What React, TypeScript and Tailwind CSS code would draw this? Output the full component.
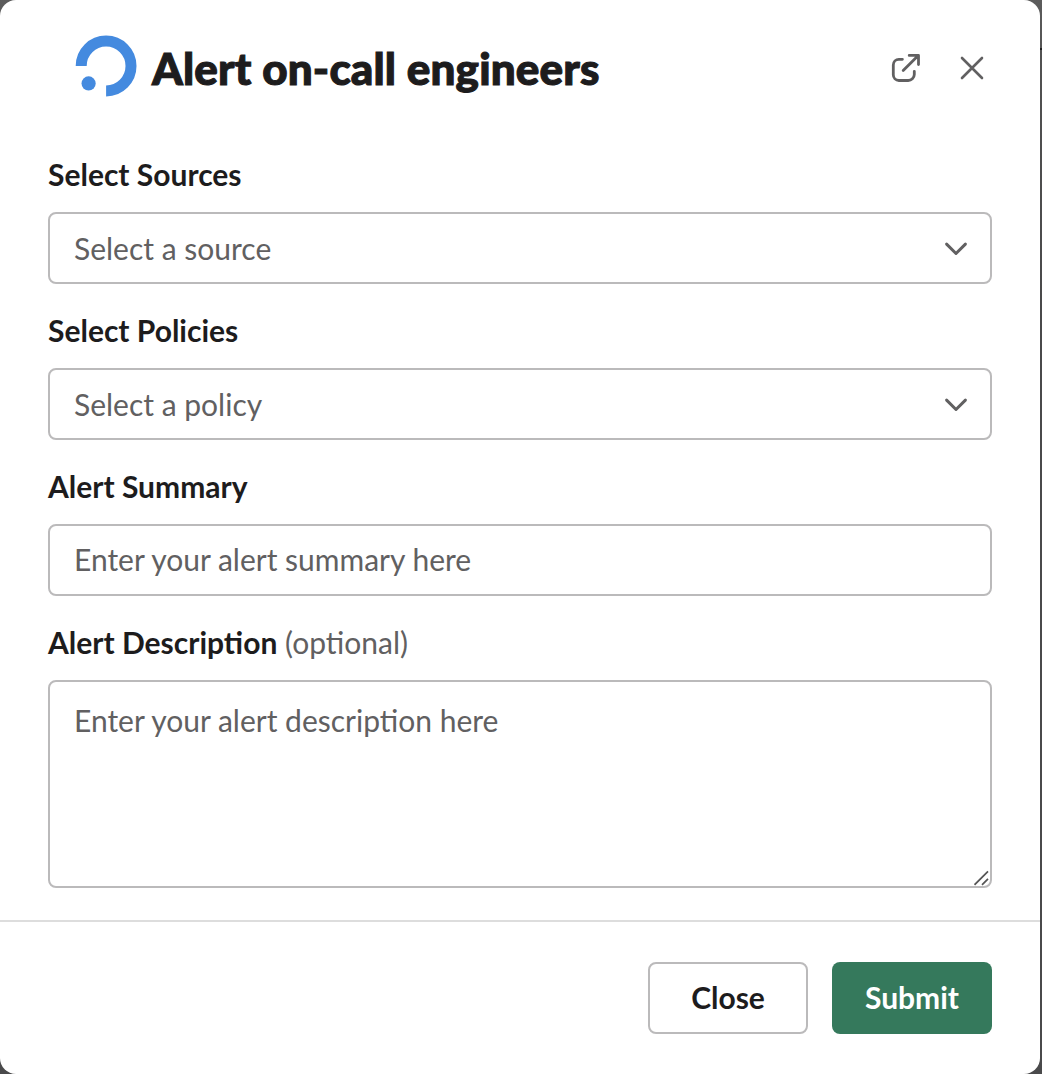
import React from "react";

function Logo() {
  return (
    <svg className="size-[72px] shrink-0" viewBox="0 0 72 72" fill="none">
      <path d="M11.2 36A24.9 24.9 0 1 1 36.1 60.9" stroke="#448ADF" strokeWidth="11" />
      <circle cx="18.6" cy="53.4" r="7.1" fill="#448ADF" />
    </svg>
  );
}

function Chevron() {
  return (
    <svg className="h-10 w-10 shrink-0" viewBox="0 0 40 40" fill="none" stroke="#616061" strokeWidth="3" strokeLinecap="round" strokeLinejoin="round">
      <path d="M10.6 16.1 20 25.5l9.4-9.4" />
    </svg>
  );
}

function SelectField({ label, placeholder }: { label: string; placeholder: string }) {
  return (
    <div>
      <div className="h-11 text-[30px] leading-[44px] font-bold">{label}</div>
      <button className="mt-4 flex h-18 w-full items-center justify-between rounded-lg border-2 border-[#bbbabb] pr-3.5 pl-6 text-left text-[#616061]">
        <span className="leading-[44px]">{placeholder}</span>
        <Chevron />
      </button>
    </div>
  );
}

export default function App() {
  return (
    <div className="h-[1074px] w-[1042px] bg-[linear-gradient(#5c5c5c_0px,#555555_48px,#1f1f20_48px,#1f1f20_50px,#525252_50px,#4a4a4b_300px,#4a4a4b_100%)] pr-0.5 font-['Lato',sans-serif] text-[30px] text-[#1d1c1d]">
      <div className="flex h-full flex-col rounded-[16px] bg-white">
        <header className="flex h-[140px] items-start pt-[30px] pr-12 pl-[70px]">
          <Logo />
          <h1 className="mt-[7px] ml-2.5 flex-1 text-[44px] leading-[62px] font-black tracking-[0.15px] whitespace-nowrap [-webkit-text-stroke:1.1px_#1d1c1d]">Alert on-call engineers</h1>
          <button aria-label="Open in new window" className="mt-[18px] mr-[26px]">
            <svg className="size-10" viewBox="0 0 40 40" fill="none" stroke="#616061" strokeWidth="2.8" strokeLinecap="round" strokeLinejoin="round">
              <path d="M16.4 11.3h-3.5a5.7 5.7 0 0 0-5.6 5.7v9.8a5.7 5.7 0 0 0 5.6 5.7H22a6.1 6.1 0 0 0 6.3-6v-3.2M23.2 7.4h9.3v9.2M32 7.8 17.2 22.6" />
            </svg>
          </button>
          <button aria-label="Close dialog" className="mt-[18px]">
            <svg className="size-10" viewBox="0 0 40 40" fill="none" stroke="#616061" strokeWidth="2.6" strokeLinecap="round">
              <path d="m10 10 20 20M30 10 10 30" />
            </svg>
          </button>
        </header>
        <main className="flex h-[780px] flex-col gap-6 px-12 pt-3">
          <SelectField label="Select Sources" placeholder="Select a source" />
          <SelectField label="Select Policies" placeholder="Select a policy" />
          <div>
            <label htmlFor="summary" className="block h-11 leading-[44px] font-bold">Alert Summary</label>
            <input id="summary" placeholder="Enter your alert summary here" className="mt-4 block h-18 w-full rounded-lg border-2 border-[#bbbabb] px-6 pb-0.5 placeholder:text-[#616061]" />
          </div>
          <div>
            <label htmlFor="description" className="block h-11 leading-[44px] font-bold">
              Alert Description <span className="ml-[0.5px] font-normal text-[#616061]">(optional)</span>
            </label>
            <div className="relative mt-4">
              <textarea id="description" placeholder="Enter your alert description here" className="block h-[208px] w-full resize-none rounded-lg border-2 border-[#bbbabb] px-6 py-4 leading-[44px] placeholder:text-[#616061]" />
              <svg className="absolute right-0.5 bottom-0.5 h-4 w-4" viewBox="0 0 16 16" fill="none" stroke="#555" strokeWidth="1.7">
                <path d="M.5 14.8 14 1.3M8 14.8 14 8.8" />
              </svg>
            </div>
          </div>
        </main>
        <footer className="flex flex-1 items-start justify-end gap-6 border-t-2 border-[#dddddd] px-12 pt-10">
          <button className="h-18 w-40 rounded-lg border-2 border-[#bbbabb] pb-0.5 font-bold">Close</button>
          <button className="h-18 w-40 rounded-lg bg-[#35795c] pb-0.5 font-bold text-white">Submit</button>
        </footer>
      </div>
    </div>
  );
}
